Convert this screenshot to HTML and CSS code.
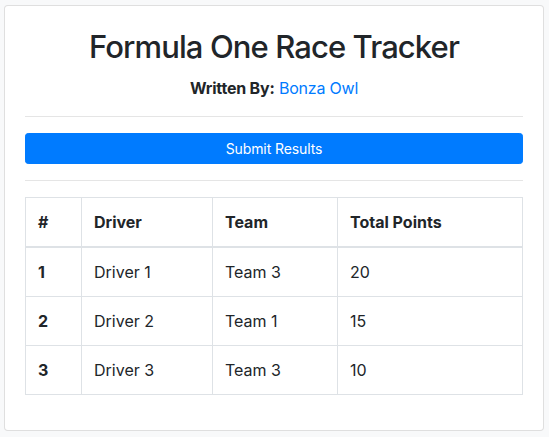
FILE: index.html
```html
<!DOCTYPE html>
<html lang="en">
<head>
<meta charset="utf-8">
<title>Formula One Race Tracker</title>
<link rel="stylesheet" href="styles.css">
</head>
<body>
<div class="page">
  <div class="card">
    <h2 class="title">Formula One Race Tracker</h2>
    <p class="byline"><strong>Written By:</strong> <a href="#" class="author">Bonza Owl</a></p>
    <hr class="rule">
    <button class="btn-submit" type="button">Submit Results</button>
    <hr class="rule">
    <table class="results">
      <colgroup>
        <col class="c-pos"><col class="c-driver"><col class="c-team"><col class="c-points">
      </colgroup>
      <thead>
        <tr><th>#</th><th>Driver</th><th>Team</th><th>Total Points</th></tr>
      </thead>
      <tbody>
        <tr><th>1</th><td>Driver 1</td><td>Team 3</td><td>20</td></tr>
        <tr><th>2</th><td>Driver 2</td><td>Team 1</td><td>15</td></tr>
        <tr><th>3</th><td>Driver 3</td><td>Team 3</td><td>10</td></tr>
      </tbody>
    </table>
  </div>
</div>
</body>
</html>
```

FILE: styles.css
```css
* { box-sizing: border-box; }
html, body { margin: 0; padding: 0; }
body {
  background: #f8f9fa;
  color: #212529;
  font-family: Inter, "Noto Sans", "Liberation Sans", sans-serif;
  font-size: 16px;
  line-height: 1.5;
}
.page {
  padding: 5px 5px 6px 4px;
}
.card {
  background: #fff;
  border: 1px solid rgba(0,0,0,.125);
  border-radius: 4px;
  padding: 20px;
  height: 426px;
}
.title {
  margin: 0 0 8px;
  font-size: 31px;
  font-weight: 500;
  letter-spacing: -0.9px;
  line-height: 42px;
  text-align: center;
}
.byline {
  margin: 0;
  text-align: center;
  line-height: 24px;
  letter-spacing: -0.2px;
}
.byline strong { font-weight: 700; }
.author { color: #007bff; text-decoration: none; }
.rule {
  margin: 16px 0;
  border: 0;
  border-top: 1px solid rgba(0,0,0,.1);
  height: 0;
}
.btn-submit {
  display: block;
  width: 100%;
  height: 31px;
  background: #007bff;
  border: 1px solid #007bff;
  border-radius: 3.2px;
  color: #fff;
  font-family: inherit;
  font-size: 14px;
  line-height: 21px;
  padding: 4px 8px;
  letter-spacing: -0.1px;
}
.results {
  width: 100%;
  border-collapse: collapse;
  margin-bottom: 16px;
  border: 1px solid #dee2e6;
}
.c-pos { width: 56px; }
.c-driver { width: 131px; }
.c-team { width: 125px; }
.c-points { width: auto; }
.results th, .results td {
  border: 1px solid #dee2e6;
  padding: 12px;
  text-align: left;
  vertical-align: top;
  line-height: 24px;
}
.results th { font-weight: 700; }
.results td { font-weight: 400; }
.results thead th {
  border-bottom: 2px solid #dee2e6;
  vertical-align: bottom;
}
```
